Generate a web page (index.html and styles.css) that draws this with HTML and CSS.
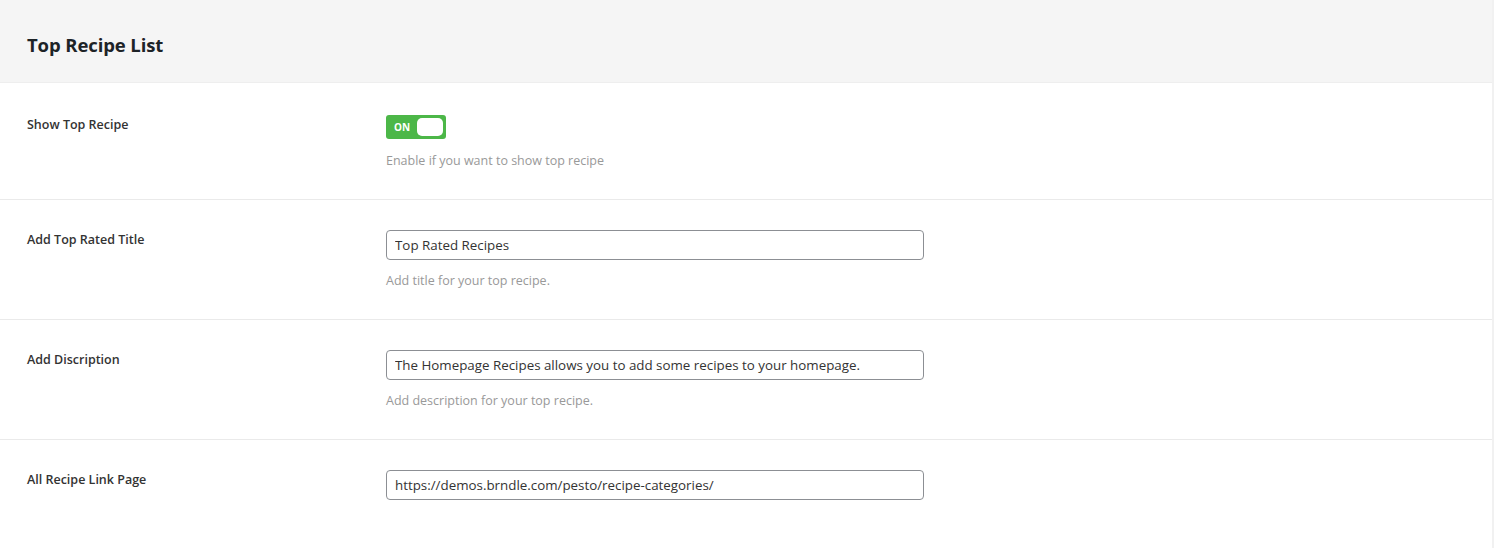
FILE: index.html
```html
<!DOCTYPE html>
<html lang="en">
<head>
    <meta charset="UTF-8">
    <meta name="viewport" content="width=device-width, initial-scale=1.0">
    <title>Top Recipe List</title>
    <link rel="stylesheet" href="styles.css">
</head>
<body>
    <div class="panel">
        <div class="panel-header">
            <h2>Top Recipe List</h2>
        </div>

        <div class="field-row">
            <div class="field-label first">Show Top Recipe</div>
            <div class="field-control">
                <label class="toggle">
                    <span class="toggle-text">ON</span>
                    <span class="toggle-knob"></span>
                </label>
                <p class="field-desc toggle-desc">Enable if you want to show top recipe</p>
            </div>
        </div>

        <div class="field-row">
            <div class="field-label">Add Top Rated Title</div>
            <div class="field-control">
                <input type="text" value="Top Rated Recipes">
                <p class="field-desc">Add title for your top recipe.</p>
            </div>
        </div>

        <div class="field-row">
            <div class="field-label">Add Discription</div>
            <div class="field-control">
                <input type="text" value="The Homepage Recipes allows you to add some recipes to your homepage.">
                <p class="field-desc">Add description for your top recipe.</p>
            </div>
        </div>

        <div class="field-row last">
            <div class="field-label">All Recipe Link Page</div>
            <div class="field-control">
                <input type="text" value="https://demos.brndle.com/pesto/recipe-categories/">
            </div>
        </div>
    </div>
</body>
</html>
```

FILE: styles.css
```css
* {
    box-sizing: border-box;
    margin: 0;
    padding: 0;
}

body {
    font-family: 'Open Sans', 'Noto Sans', sans-serif;
    font-size: 13px;
    color: #333;
    background: #f1f1f1;
    height: 548px;
    overflow: hidden;
}

.panel {
    width: 1492px;
    background: #fff;
    min-height: 548px;
}

.panel-header {
    height: 83px;
    background: #f5f5f5;
    border-bottom: 1px solid #eee;
    padding: 0 27px;
    display: flex;
    align-items: center;
}

.panel-header h2 {
    font-size: 18.5px;
    font-weight: 700;
    color: #1d2327;
    letter-spacing: -0.1px;
    padding-top: 6px;
}

.field-row {
    display: grid;
    grid-template-columns: 359px 538px;
    padding: 30px 27px 28px;
    border-bottom: 1px solid #eaeaea;
}

.field-row.last {
    border-bottom: none;
}

.field-label {
    font-size: 12.5px;
    font-weight: 600;
    color: #333;
    line-height: 20px;
}

.field-label.first {
    padding-top: 2px;
}

input[type="text"] {
    width: 538px;
    height: 30px;
    padding: 0 8px;
    border: 1px solid #8c8f94;
    border-radius: 4px;
    font-family: inherit;
    font-size: 13.35px;
    color: #333;
    background: #fff;
}

.field-desc {
    margin-top: 11px;
    line-height: 20px;
    color: #999;
    font-size: 12.5px;
}

.toggle-desc {
    margin-top: 12px;
}

.toggle {
    margin-top: 2px;
    display: flex;
    align-items: center;
    justify-content: space-between;
    width: 60px;
    height: 24px;
    padding: 3px 3px 3px 8px;
    background: #4cb748;
    border-radius: 3px;
}

.toggle-text {
    color: #fff;
    font-size: 10px;
    font-weight: 700;
    line-height: 1;
}

.toggle-knob {
    width: 26px;
    height: 18px;
    background: #fff;
    border-radius: 5px;
}
```
